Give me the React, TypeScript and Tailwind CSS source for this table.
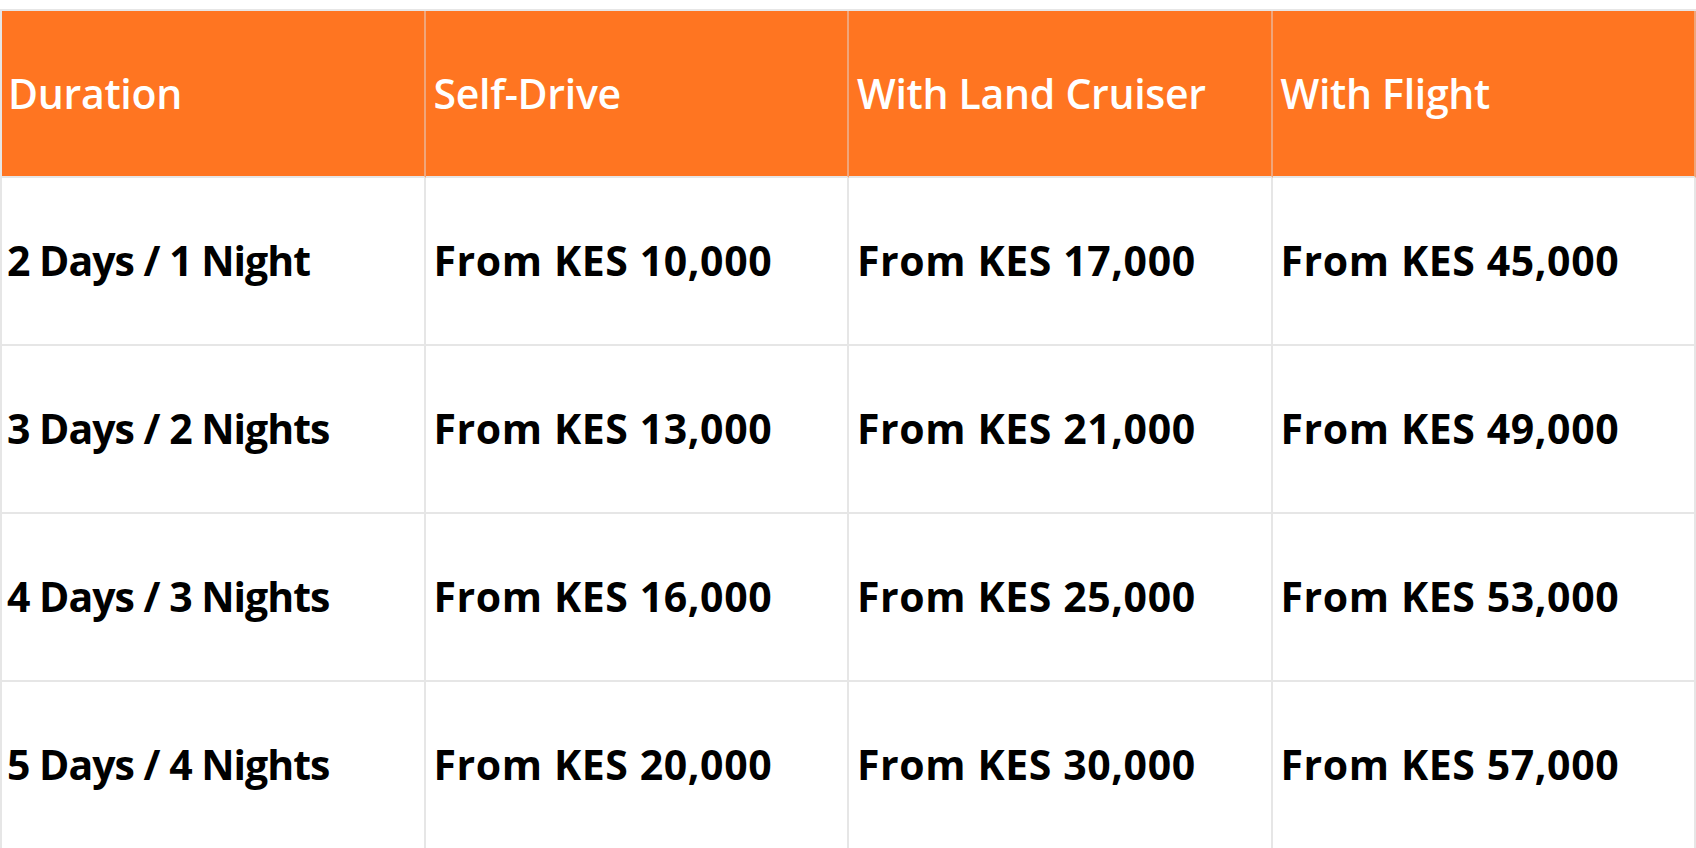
import React from "react"

const headers = ["Duration", "Self-Drive", "With Land Cruiser", "With Flight"]

const rows = [
  ["2 Days / 1 Night", "From KES 10,000", "From KES 17,000", "From KES 45,000"],
  ["3 Days / 2 Nights", "From KES 13,000", "From KES 21,000", "From KES 49,000"],
  ["4 Days / 3 Nights", "From KES 16,000", "From KES 25,000", "From KES 53,000"],
  ["5 Days / 4 Nights", "From KES 20,000", "From KES 30,000", "From KES 57,000"],
]

export default function App() {
  return (
    <div
      className="w-[1696px] h-[848px] bg-white pt-[9px] overflow-hidden"
      style={{ fontFamily: '"Open Sans", "Liberation Sans", sans-serif' }}
    >
      <div className="w-[1696px] border-t-2 border-l-2 border-[#e6e6e6]">
        {/* Header row */}
        <div className="grid grid-cols-4 bg-[#ff7521]">
          {headers.map((h, j) => (
            <div
              key={h}
              className={`h-[167px] flex items-center border-r-2 border-b-2 border-r-[#f0a57a] border-b-[#e6e6e6] text-white text-[41px] font-semibold tracking-[-0.3px] ${
                j === 0 ? "pl-[6px]" : "pl-[8px]"
              }`}
            >
              {h}
            </div>
          ))}
        </div>
        {/* Price rows */}
        {rows.map((row, i) => (
          <div key={i} className="grid grid-cols-4">
            {row.map((cell, j) => (
              <div
                key={j}
                className={`h-[168px] flex items-center border-r-2 border-b-2 border-[#e6e6e6] text-black text-[41px] font-bold ${
                  j === 0 ? "pl-[5px] tracking-[-1px]" : "pl-[8px] tracking-[0.6px]"
                }`}
              >
                {cell}
              </div>
            ))}
          </div>
        ))}
      </div>
    </div>
  )
}
